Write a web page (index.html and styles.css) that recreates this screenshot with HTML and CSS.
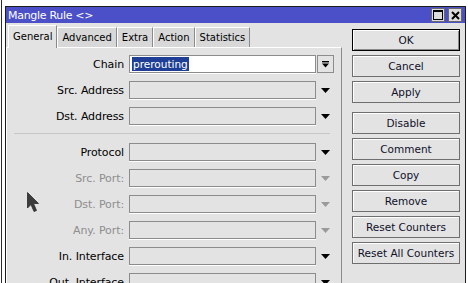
FILE: index.html
```html
<!DOCTYPE html>
<html lang="en">
<head>
    <meta charset="UTF-8">
    <meta name="viewport" content="width=device-width, initial-scale=1.0">
    <title>Mangle Rule</title>
    <link rel="stylesheet" href="styles.css">
</head>
<body>
    <div class="window">
        <div class="titlebar">
            <span class="title">Mangle Rule &lt;&gt;</span>
            <div class="title-buttons">
                <span class="tbtn"><span class="max-box"></span></span>
                <span class="tbtn">
                    <svg width="9" height="9" viewBox="0 0 9 9"><path d="M1 1 L8 8 M8 1 L1 8" stroke="#000" stroke-width="2"/></svg>
                </span>
            </div>
        </div>

        <div class="content">
            <div class="tabview">
                <div class="tabs">
                    <div class="tab active">General</div>
                    <div class="tab">Advanced</div>
                    <div class="tab">Extra</div>
                    <div class="tab">Action</div>
                    <div class="tab">Statistics</div>
                </div>

                <div class="panel">
                    <label class="lbl">Chain</label>
                    <div class="field edit"><span class="selected">prerouting</span></div>
                    <div class="combo-btn">
                        <svg width="9" height="9" viewBox="0 0 9 9"><rect x="1" y="1" width="7" height="1.4" fill="#000"/><polygon points="1,3.5 8,3.5 4.5,7.5" fill="#000"/></svg>
                    </div>

                    <label class="lbl">Src. Address</label>
                    <div class="field"></div>
                    <div class="arrow"><svg width="9" height="5" viewBox="0 0 9 5"><polygon points="0,0 9,0 4.5,5" fill="#000"/></svg></div>

                    <label class="lbl">Dst. Address</label>
                    <div class="field"></div>
                    <div class="arrow"><svg width="9" height="5" viewBox="0 0 9 5"><polygon points="0,0 9,0 4.5,5" fill="#000"/></svg></div>

                    <div class="sep"></div>

                    <label class="lbl">Protocol</label>
                    <div class="field"></div>
                    <div class="arrow"><svg width="9" height="5" viewBox="0 0 9 5"><polygon points="0,0 9,0 4.5,5" fill="#000"/></svg></div>

                    <label class="lbl off">Src. Port:</label>
                    <div class="field"></div>
                    <div class="arrow"><svg width="9" height="5" viewBox="0 0 9 5"><polygon points="0,0 9,0 4.5,5" fill="#9a9a9a"/></svg></div>

                    <label class="lbl off">Dst. Port:</label>
                    <div class="field"></div>
                    <div class="arrow"><svg width="9" height="5" viewBox="0 0 9 5"><polygon points="0,0 9,0 4.5,5" fill="#9a9a9a"/></svg></div>

                    <label class="lbl off">Any. Port:</label>
                    <div class="field"></div>
                    <div class="arrow"><svg width="9" height="5" viewBox="0 0 9 5"><polygon points="0,0 9,0 4.5,5" fill="#9a9a9a"/></svg></div>

                    <label class="lbl">In. Interface</label>
                    <div class="field"></div>
                    <div class="arrow"><svg width="9" height="5" viewBox="0 0 9 5"><polygon points="0,0 9,0 4.5,5" fill="#000"/></svg></div>

                    <label class="lbl">Out. Interface</label>
                    <div class="field"></div>
                    <div class="arrow"><svg width="9" height="5" viewBox="0 0 9 5"><polygon points="0,0 9,0 4.5,5" fill="#000"/></svg></div>
                </div>
            </div>

            <div class="actions">
                <button class="btn default">OK</button>
                <button class="btn">Cancel</button>
                <button class="btn">Apply</button>
                <button class="btn spaced">Disable</button>
                <button class="btn">Comment</button>
                <button class="btn">Copy</button>
                <button class="btn">Remove</button>
                <button class="btn">Reset Counters</button>
                <button class="btn">Reset All Counters</button>
            </div>
        </div>
    </div>

    <!-- mouse pointer sitting over the dialog -->
    <svg class="pointer" width="13" height="21" viewBox="0 0 13 21">
        <polygon points="0.5,0.5 0.5,16 4,12.5 7,19.5 9.5,18.5 6.5,11.5 11.5,11.5" fill="#3c3c3c" stroke="#2a2a2a" stroke-width="0.8"/>
    </svg>
</body>
</html>
```

FILE: styles.css
```css
html, body {
    margin: 0;
    padding: 0;
}

body {
    width: 468px;
    height: 283px;
    overflow: hidden;
    position: relative;
    font-family: "DejaVu Sans", Verdana, sans-serif;
    font-size: 10.5px;
    color: #000;
    background: linear-gradient(to right, #fff 0, #fff 1px, #2a2a2a 1px, #2a2a2a 2px, #fff 2px);
    padding-top: 6px;
    box-sizing: border-box;
}

.window {
    margin-left: 5px;
    width: 461px;
    height: 290px;
    box-sizing: border-box;
    border: 1px solid #1c1c1c;
    border-bottom: none;
    background-color: #e3e3e3;
    display: flex;
    flex-direction: column;
}

.titlebar {
    height: 16px;
    background-color: #4b50c9;
    display: flex;
    align-items: center;
    justify-content: space-between;
    padding-left: 2px;
    padding-right: 3px;
}

.title {
    color: #fff;
    font-size: 11px;
    letter-spacing: -0.3px;
}

.title-buttons {
    display: flex;
    gap: 3px;
}

.tbtn {
    width: 14px;
    height: 14px;
    box-sizing: border-box;
    background-color: #dcdcdc;
    border: 1px solid #6a6a6a;
    display: flex;
    align-items: center;
    justify-content: center;
}

.max-box {
    width: 10px;
    height: 10px;
    box-sizing: border-box;
    border: 1px solid #000;
    border-top-width: 2px;
}

.content {
    flex: 1;
    display: flex;
}

.tabview {
    width: 336px;
    padding-top: 2px;
    display: flex;
    flex-direction: column;
}

.tabs {
    display: flex;
    align-items: flex-end;
    padding-left: 2px;
    height: 22px;
}

.tab {
    height: 20px;
    box-sizing: border-box;
    padding: 0 4px;
    display: flex;
    align-items: center;
    font-size: 10px;
    background-color: #d8d8d8;
    border-top: 1px solid #fff;
    border-left: 1px solid #fff;
    border-right: 1px solid #8a8a8a;
    white-space: nowrap;
}

.tab.active {
    height: 23px;
    margin-bottom: -1px;
    background-color: #e3e3e3;
    padding-bottom: 2px;
    position: relative;
}

.panel {
    flex: 1;
    border-top: 1px solid #fff;
    border-left: 1px solid #fff;
    border-right: 1px solid #8a8a8a;
    padding: 7px 0 0 0;
    display: grid;
    grid-template-columns: 122px 188px 17px;
    row-gap: 8px;
    align-content: start;
}

.lbl {
    padding-right: 5px;
    text-align: right;
    align-self: center;
    white-space: nowrap;
    font-size: 11px;
    letter-spacing: -0.1px;
}

.lbl.off {
    color: #8e8e8e;
}

.field {
    width: 187px;
    height: 18px;
    box-sizing: border-box;
    border: 1px solid #8c8c8c;
    background-color: #e3e3e3;
    box-shadow: 0 1px 0 #fff;
}

.field.edit {
    background-color: #fff;
    display: flex;
    align-items: center;
    padding-left: 2px;
}

.selected {
    background-color: #1f3f96;
    color: #fff;
    line-height: 14px;
    padding: 0 1px;
    font-size: 10.5px;
}

.combo-btn {
    box-sizing: border-box;
    border: 1px solid #8c8c8c;
    width: 17px;
    height: 18px;
    display: flex;
    align-items: center;
    justify-content: center;
}

.arrow {
    height: 18px;
    display: flex;
    align-items: center;
    justify-content: center;
}

.sep {
    grid-column: 1 / -1;
    height: 1px;
    margin: 0 4px 0 7px;
    background-color: #c6c6c6;
}

.panel .sep + .lbl,
.panel .sep + .lbl + .field,
.panel .sep + .lbl + .field + .arrow {
    margin-top: 1px;
}

.actions {
    flex: 1;
    padding: 6px 0 0 10px;
    display: flex;
    flex-direction: column;
    gap: 4px;
}

.btn {
    width: 108px;
    height: 22px;
    box-sizing: border-box;
    font-family: "DejaVu Sans", Verdana, sans-serif;
    font-size: 10.5px;
    color: #10102a;
    background-color: #e3e3e3;
    border: 1px solid #6e6e6e;
    box-shadow: inset 1px 1px 0 #fff;
    padding: 0;
    cursor: pointer;
}

.btn.default {
    border-color: #000;
    box-shadow: inset 1px 1px 0 #fff, inset -1px -1px 0 #8a8a8a;
}

.btn.spaced {
    margin-top: 5px;
}

.pointer {
    position: absolute;
    left: 27px;
    top: 192px;
}
```
